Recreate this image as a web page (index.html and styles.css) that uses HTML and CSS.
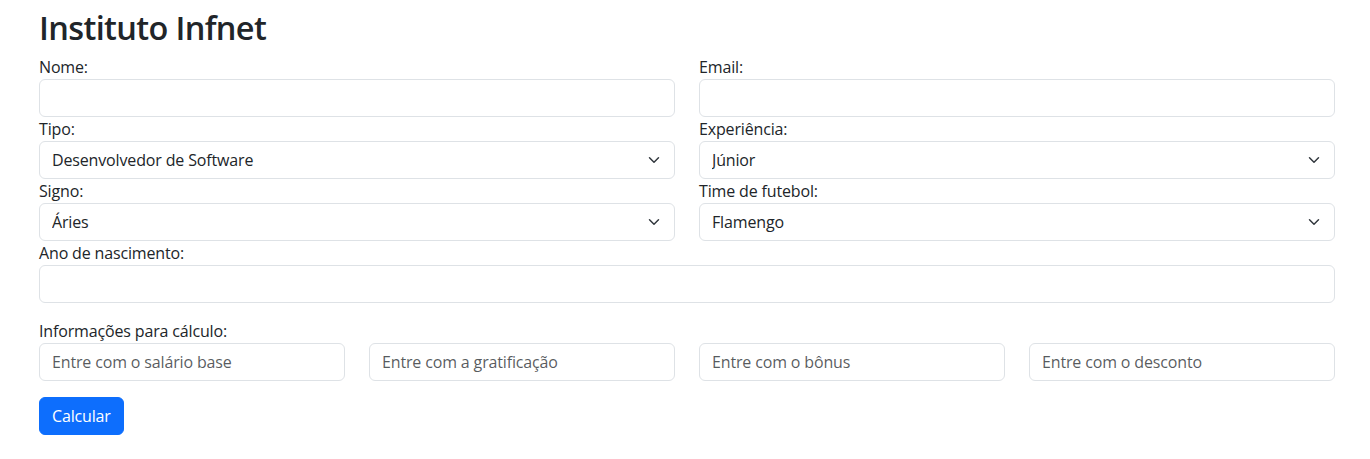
FILE: index.html
```html
<!DOCTYPE html>
<html lang="pt-BR">
<head>
<meta charset="utf-8">
<title>Instituto Infnet</title>
<link rel="stylesheet" href="styles.css">
</head>
<body>
<div class="container">
  <h1 class="title">Instituto Infnet</h1>
  <form class="form">
    <div class="row two">
      <div class="field">
        <label class="label" for="nome">Nome:</label>
        <input class="control" id="nome" type="text">
      </div>
      <div class="field">
        <label class="label" for="email">Email:</label>
        <input class="control" id="email" type="email">
      </div>
      <div class="field">
        <label class="label" for="tipo">Tipo:</label>
        <select class="control select" id="tipo">
          <option>Desenvolvedor de Software</option>
        </select>
      </div>
      <div class="field">
        <label class="label" for="exp">Experiência:</label>
        <select class="control select" id="exp">
          <option>Júnior</option>
        </select>
      </div>
      <div class="field">
        <label class="label" for="signo">Signo:</label>
        <select class="control select" id="signo">
          <option>Áries</option>
        </select>
      </div>
      <div class="field">
        <label class="label" for="time">Time de futebol:</label>
        <select class="control select" id="time">
          <option>Flamengo</option>
        </select>
      </div>
    </div>
    <div class="field">
      <label class="label" for="ano">Ano de nascimento:</label>
      <input class="control" id="ano" type="text">
    </div>
    <div class="calc">
      <label class="label">Informações para cálculo:</label>
      <div class="row four">
        <input class="control" type="text" placeholder="Entre com o salário base">
        <input class="control" type="text" placeholder="Entre com a gratificação">
        <input class="control" type="text" placeholder="Entre com o bônus">
        <input class="control" type="text" placeholder="Entre com o desconto">
      </div>
    </div>
    <button class="btn" type="button">Calcular</button>
  </form>
</div>
</body>
</html>
```
FILE: styles.css
```css
* { box-sizing: border-box; }
html, body { margin: 0; padding: 0; background: #fff; }
body {
  font-family: "Open Sans", "Noto Sans", sans-serif;
  font-size: 16px;
  line-height: 24px;
  letter-spacing: -0.15px;
  color: #212529;
}
.container {
  width: 1296px;
  margin-left: 39px;
}
.title {
  margin: 0 0 8px 0;
  padding-top: 8px;
  font-size: 32.5px;
  line-height: 39px;
  font-weight: 600;
  letter-spacing: -0.65px;
}
.form { display: flex; flex-direction: column; align-items: flex-start; }
.form > * { width: 100%; }
.row { display: grid; column-gap: 24px; }
.two { grid-template-columns: 1fr 1fr; }
.four { grid-template-columns: repeat(4, 1fr); }
.field { display: flex; flex-direction: column; }
.label { display: block; font-size: 16px; line-height: 24px; }
.control {
  display: block;
  width: 100%;
  height: 38px;
  padding: 6px 12px;
  font-family: inherit;
  font-size: 16px;
  line-height: 24px;
  letter-spacing: inherit;
  color: #212529;
  background-color: #fff;
  border: 1px solid #dee2e6;
  border-radius: 6px;
  appearance: none;
  -webkit-appearance: none;
  margin: 0;
}
.control::placeholder { color: rgba(33, 37, 41, 0.75); opacity: 1; }
.select {
  padding-right: 36px;
  background-image: url("data:image/svg+xml,%3csvg xmlns='http://www.w3.org/2000/svg' viewBox='0 0 16 16'%3e%3cpath fill='none' stroke='%23343a40' stroke-linecap='round' stroke-linejoin='round' stroke-width='2' d='m2 5 6 6 6-6'/%3e%3c/svg%3e");
  background-repeat: no-repeat;
  background-position: right 12px center;
  background-size: 16px 12px;
}
.calc { margin-top: 16px; }
.btn {
  width: auto;
  margin-top: 16px;
  padding: 6px 12px;
  font-family: inherit;
  font-size: 16px;
  line-height: 24px;
  letter-spacing: inherit;
  color: #fff;
  background-color: #0d6efd;
  border: 1px solid #0d6efd;
  border-radius: 6px;
  cursor: pointer;
}
```
